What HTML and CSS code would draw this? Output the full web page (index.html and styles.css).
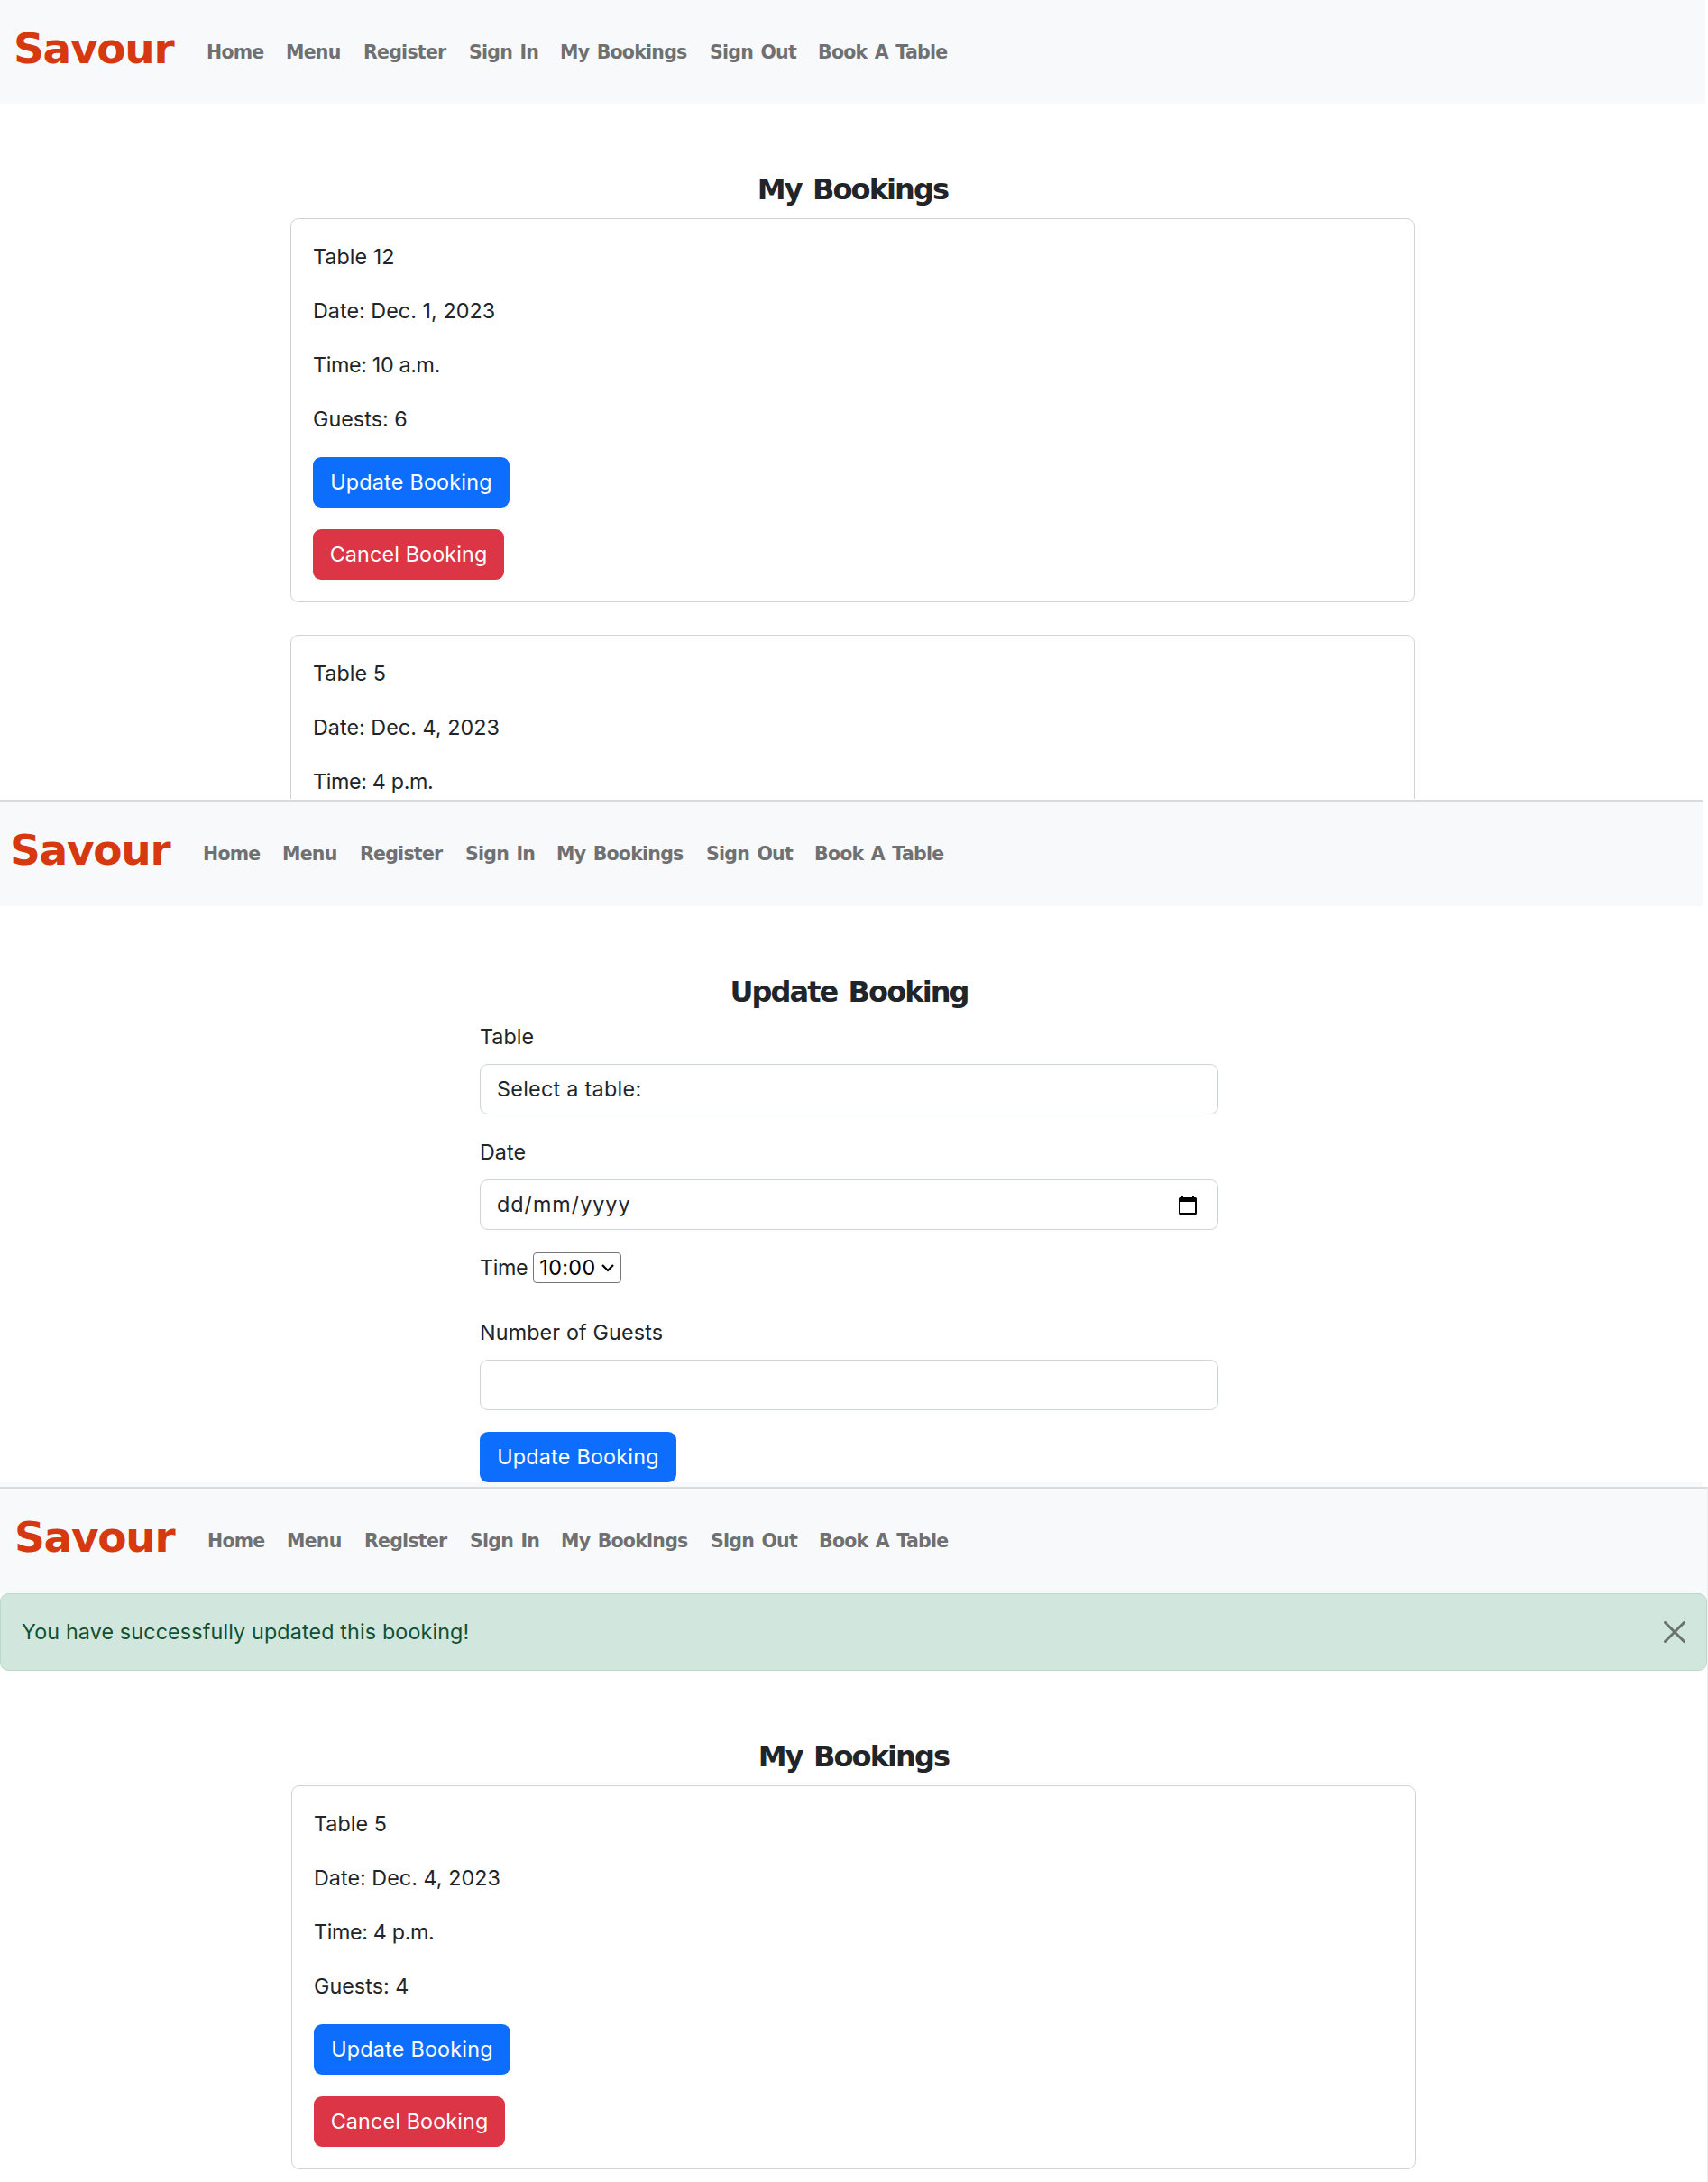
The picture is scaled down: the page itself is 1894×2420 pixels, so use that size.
FILE: index.html
```html
<!DOCTYPE html>
<html lang="en">
<head>
<meta charset="utf-8">
<title>Savour - My Bookings</title>
<link rel="stylesheet" href="styles.css">
</head>
<body>
<section class="screen screen-list">
  <nav class="navbar">
    <a class="brand">Savour</a>
    <a class="link home">Home</a><a class="link menu">Menu</a><a class="link register">Register</a><a class="link signin">Sign In</a><a class="link bookings">My Bookings</a><a class="link signout">Sign Out</a><a class="link book">Book A Table</a>
  </nav>
  <h1 class="title">My Bookings</h1>
  <article class="card">
    <p>Table 12</p><p>Date: Dec. 1, 2023</p><p class="tight">Time: 10 a.m.</p><p>Guests: 6</p>
    <a class="btn btn-primary">Update Booking</a>
    <a class="btn btn-danger">Cancel Booking</a>
  </article>
  <article class="card">
    <p>Table 5</p><p>Date: Dec. 4, 2023</p><p class="tight">Time: 4 p.m.</p>
  </article>
</section>

<section class="screen screen-form">
  <nav class="navbar">
    <a class="brand">Savour</a>
    <a class="link home">Home</a><a class="link menu">Menu</a><a class="link register">Register</a><a class="link signin">Sign In</a><a class="link bookings">My Bookings</a><a class="link signout">Sign Out</a><a class="link book">Book A Table</a>
  </nav>
  <h1 class="title">Update Booking</h1>
  <form class="form">
    <label>Table</label>
    <div class="field select-table">Select a table:</div>
    <label>Date</label>
    <div class="field date"><span>dd/mm/yyyy</span>
      <svg class="calendar" viewBox="0 0 20 21"><path fill-rule="evenodd" d="M3 0h2v2h10V0h2v2h1.500a1.500 1.500 0 0 1 1.500 1.500v16a1.500 1.500 0 0 1-1.500 1.500h-17a1.500 1.500 0 0 1-1.500-1.500v-16a1.500 1.500 0 0 1 1.500-1.500H3zM2 7v12h16V7z"/></svg>
    </div>
    <div class="time-row"><label class="tight">Time</label>
      <div class="time"><span>10:00</span><svg class="chevron" viewBox="0 0 14 9"><path d="M1 1l6 6 6-6"/></svg></div>
    </div>
    <label class="guests">Number of Guests</label>
    <div class="field"></div>
    <a class="btn btn-primary">Update Booking</a>
  </form>
  <footer class="footer"></footer>
</section>

<section class="screen screen-updated">
  <nav class="navbar">
    <a class="brand">Savour</a>
    <a class="link home">Home</a><a class="link menu">Menu</a><a class="link register">Register</a><a class="link signin">Sign In</a><a class="link bookings">My Bookings</a><a class="link signout">Sign Out</a><a class="link book">Book A Table</a>
  </nav>
  <div class="alert"><span>You have successfully updated this booking!</span>
    <svg class="close" viewBox="0 0 24 24"><path d="M1.500 1.500l21 21M22.500 1.500l-21 21"/></svg>
  </div>
  <h1 class="title">My Bookings</h1>
  <article class="card">
    <p>Table 5</p><p>Date: Dec. 4, 2023</p><p class="tight">Time: 4 p.m.</p><p>Guests: 4</p>
    <a class="btn btn-primary">Update Booking</a>
    <a class="btn btn-danger">Cancel Booking</a>
  </article>
</section>
</body>
</html>
```
FILE: styles.css
```css
* { box-sizing: border-box; }
body { margin: 0; width: 1894px; height: 2420px; overflow: hidden; background: #fff; color: #212529; font: 23.3px/36px Inter, "Noto Sans", sans-serif; letter-spacing: .04px; }
.screen { overflow: hidden; }
.screen-list { height: 886px; width: 1891px; margin-bottom: 1px; }
.screen-form { height: 762px; width: 1888px; border-top: 2px solid #d8dade; }
.screen-updated { height: 771px; width: 1894px; border-top: 2px solid #dadbdd; border-right: 1px solid #eeeff0; }

.navbar { display: flex; align-items: center; height: 115px; padding-left: 15px; background: #f8f9fb; }
.screen-form .navbar { height: 116px; padding-left: 11px; }
.screen-updated .navbar { height: 116px; padding-left: 16px; }
.brand { width: 214px; padding-bottom: 8px; color: #d63910; font-family: "DejaVu Sans", sans-serif; font-size: 47px; font-weight: 700; letter-spacing: -1.3px; line-height: 70px; }
.link { color: #6f7071; font-family: "DejaVu Sans", sans-serif; font-size: 20.5px; font-weight: 700; letter-spacing: -.75px; word-spacing: 2px; white-space: nowrap; }
.home { width: 88px; }
.menu { width: 86px; }
.register { width: 117px; }
.signin { width: 101px; }
.bookings { width: 166px; }
.signout { width: 120px; }

.title { margin: 76px 0 12px; font-family: "DejaVu Sans", sans-serif; font-size: 32px; font-weight: 700; line-height: 39px; letter-spacing: -1.9px; word-spacing: 3px; text-align: center; }
.card { width: 1247px; margin: 0 auto 36px; padding: 24px; border: 1px solid #d2d3d4; border-radius: 9px; }
.card p { margin: 0 0 24px; }
.card .tight, .form .tight { letter-spacing: -.35px; }
.btn { display: flex; align-items: center; justify-content: center; width: 218px; height: 56px; border-radius: 9px; color: #fff; letter-spacing: .25px; white-space: nowrap; }
.btn-primary { background: #0d6efd; }
.btn-danger { width: 212px; margin-top: 24px; background: #dc3545; letter-spacing: .15px; }

.form { width: 819px; margin-left: 532px; }
.form label { display: block; }
.screen-form .title { margin: 76px 5px 12px 0; }
.field { display: flex; align-items: center; justify-content: space-between; height: 56px; margin: 12px 0 24px; padding: 0 18px; border: 1px solid #ced4da; border-radius: 9px; }
.select-table { letter-spacing: .3px; }
.date { letter-spacing: 1px; }
.calendar { width: 20px; height: 21px; margin-right: 5px; }
.time-row { display: flex; align-items: center; gap: 6px; height: 36px; }
.time { display: flex; align-items: center; justify-content: space-between; width: 98px; height: 34px; padding: 0 7px 0 6px; border: 1px solid #767676; border-radius: 4px; color: #000; letter-spacing: .4px; }
.chevron { width: 14px; height: 9px; fill: none; stroke: #000; stroke-width: 2.2; }
.form .guests { margin-top: 36px; letter-spacing: .15px; }
.footer { height: 5px; background: #f8f9fb; }

.alert { display: flex; align-items: center; justify-content: space-between; height: 86px; padding: 0 23px; border: 1px solid #badbcc; border-radius: 9px; background: #d1e7dd; color: #0f5132; letter-spacing: .14px; }
.close { width: 24px; height: 24px; fill: none; stroke: #68736e; stroke-width: 3; stroke-linecap: round; }
```
